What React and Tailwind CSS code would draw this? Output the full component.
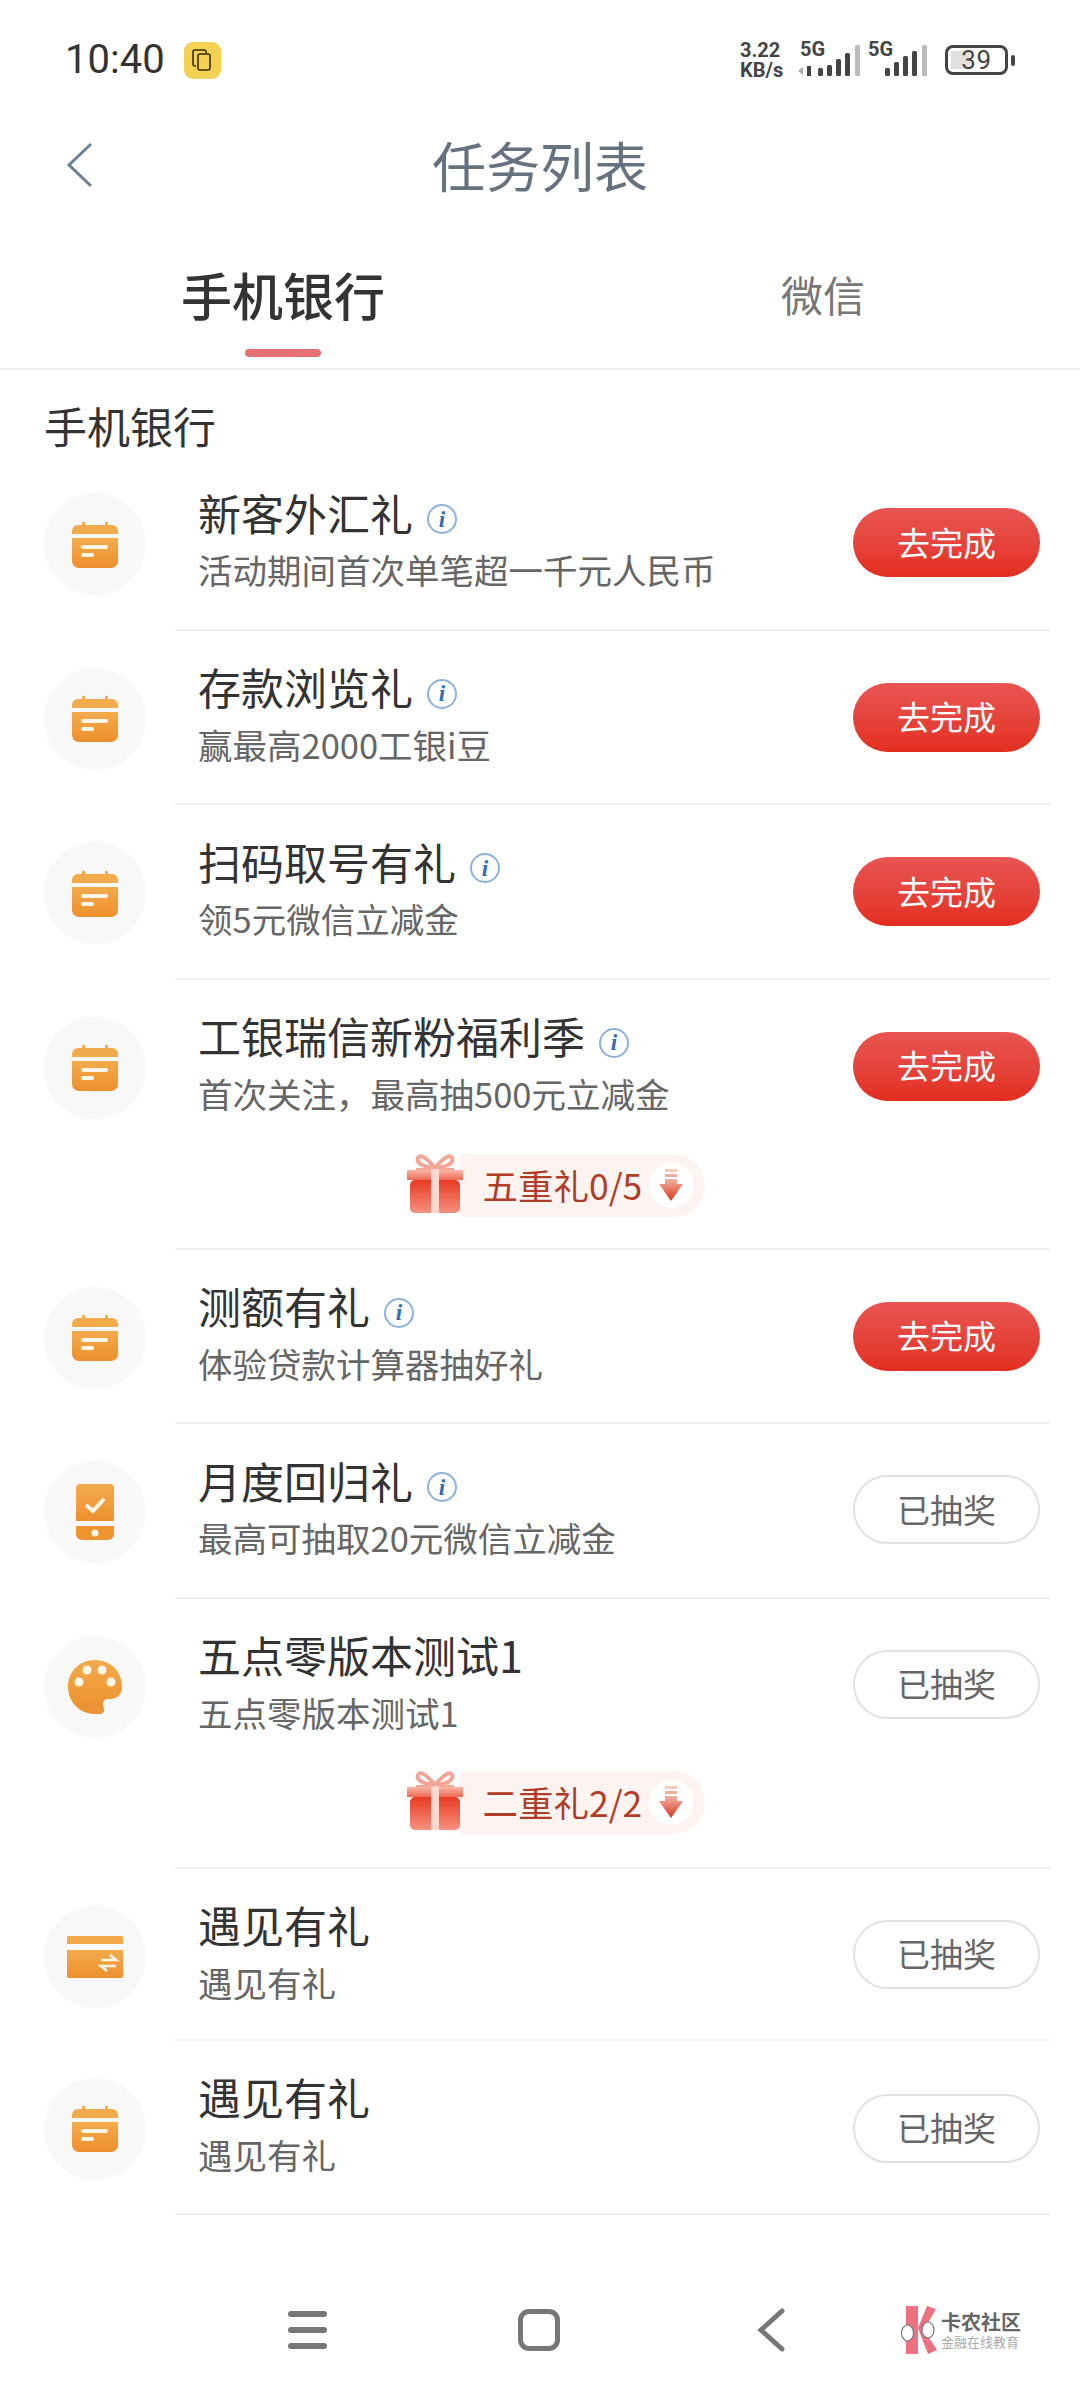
import React from 'react';

const FONT = 'font-["Noto_Sans_CJK_SC","Noto_Sans",sans-serif]';

const tasks = [
  { title: '新客外汇礼', sub: '活动期间首次单笔超一千元人民币', icon: 'calendar', info: true, done: false },
  { title: '存款浏览礼', sub: '赢最高2000工银i豆', icon: 'calendar', info: true, done: false },
  { title: '扫码取号有礼', sub: '领5元微信立减金', icon: 'calendar', info: true, done: false },
  { title: '工银瑞信新粉福利季', sub: '首次关注，最高抽500元立减金', icon: 'calendar', info: true, done: false, gift: '五重礼0/5' },
  { title: '测额有礼', sub: '体验贷款计算器抽好礼', icon: 'calendar', info: true, done: false },
  { title: '月度回归礼', sub: '最高可抽取20元微信立减金', icon: 'phone', info: true, done: true },
  { title: '五点零版本测试1', sub: '五点零版本测试1', icon: 'palette', info: false, done: true, gift: '二重礼2/2' },
  { title: '遇见有礼', sub: '遇见有礼', icon: 'card', info: false, done: true },
  { title: '遇见有礼', sub: '遇见有礼', icon: 'calendar', info: false, done: true },
];

const Gradients = () => (
  <svg width="0" height="0" className="absolute">
    <defs>
      <linearGradient id="orange" x1="0" y1="0" x2="0" y2="1">
        <stop offset="0" stopColor="#f2ab4c" />
        <stop offset="1" stopColor="#ee8f2d" />
      </linearGradient>
      <linearGradient id="giftBox" x1="0" y1="0" x2="0" y2="1">
        <stop offset="0" stopColor="#e93a22" />
        <stop offset="1" stopColor="#f5917f" />
      </linearGradient>
      <linearGradient id="giftLid" x1="0" y1="0" x2="0" y2="1">
        <stop offset="0" stopColor="#f9b5a6" />
        <stop offset="1" stopColor="#ef6a55" />
      </linearGradient>
      <linearGradient id="arrow" x1="0" y1="0" x2="0" y2="1">
        <stop offset="0" stopColor="#f3b3a2" />
        <stop offset="1" stopColor="#d9351c" />
      </linearGradient>
    </defs>
  </svg>
);

const TaskIcon = ({ type }) => {
  if (type === 'phone') {
    return (
      <svg width="38" height="56" viewBox="0 0 38 56">
        <path d="M4 0h30a4 4 0 0 1 4 4v33H0V4a4 4 0 0 1 4-4z" fill="url(#orange)" />
        <path d="M0 42h38v8a6 6 0 0 1-6 6H6a6 6 0 0 1-6-6z" fill="#ee942f" />
        <path d="M10 21l7 6 11-12" fill="none" stroke="#fff6e8" strokeWidth="4" />
        <circle cx="19" cy="49" r="3.5" fill="#fff6e8" />
      </svg>
    );
  }
  if (type === 'palette') {
    return (
      <svg width="54" height="54" viewBox="0 0 54 54">
        <path d="M27 0C12 0 0 11 0 27c0 15 12 27 27 27h4c3 0 5-2 5-4 0-3-1-4-1-6 0-3 2-5 5-5h3c6 0 11-5 11-12C54 11 42 0 27 0z" fill="url(#orange)" />
        <path d="M12 47c2-6 9-8 16-8 3 0 6 1 7 3l-1 4c0 3 2 4 2 5-1 2-3 3-5 3h-4c-6 0-11-3-15-7z" fill="#ec9335" />
        <circle cx="11" cy="22" r="4.5" fill="#fff6e8" />
        <circle cx="19" cy="10" r="4.5" fill="#fff6e8" />
        <circle cx="34" cy="10" r="4.5" fill="#fff6e8" />
        <circle cx="43" cy="22" r="4.5" fill="#fff6e8" />
      </svg>
    );
  }
  if (type === 'card') {
    return (
      <svg width="56" height="42" viewBox="0 0 56 42">
        <path d="M2 0h52a2 2 0 0 1 2 2v6H0V2a2 2 0 0 1 2-2z" fill="#f2a94a" />
        <path d="M0 14h56v26a2 2 0 0 1-2 2H2a2 2 0 0 1-2-2z" fill="url(#orange)" />
        <path d="M34 24h15l-6-5M49 30H34l6 5" fill="none" stroke="#fff6e8" strokeWidth="2.6" />
      </svg>
    );
  }
  return (
    <svg width="46" height="47" viewBox="0 0 46 47">
      <path d="M10 2a1.500 1.500 0 0 1 3 0v2h20V2a1.500 1.500 0 0 1 3 0v2h4a6 6 0 0 1 6 6v3H0v-3a6 6 0 0 1 6-6h4z" fill="#f2ab4c" />
      <path d="M0 17h46v23a7 7 0 0 1-7 7H7a7 7 0 0 1-7-7z" fill="url(#orange)" />
      <rect x="9" y="24" width="27" height="4" rx="2" fill="#fff6e8" />
      <rect x="9" y="32" width="13" height="4" rx="2" fill="#fff6e8" />
    </svg>
  );
};

const GiftBanner = ({ label, up }) => (
  <div className="flex justify-center h-[96px] pl-[30px]">
    <div className={`flex items-center h-[63px] ${up ? '-mt-[2px]' : 'mt-0'}`}>
      <svg width="58" height="59" viewBox="0 0 58 59" className="relative z-10 -mr-[4px] -mt-[4px]">
        <path d="M29 14C20 3 14 0 12 4c-2 4 3 9 17 10zM29 14C38 3 44 0 46 4c2 4-3 9-17 10z" fill="none" stroke="#f3a697" strokeWidth="4" />
        <path d="M10 14h38v2H10z" fill="#f3a697" />
        <rect x="4" y="26" width="50" height="33" rx="5" fill="url(#giftBox)" />
        <path d="M1 16h56v10H1z" fill="url(#giftLid)" />
        <rect x="25" y="15" width="8" height="44" fill="#fbd9d0" />
      </svg>
      <div className="flex items-center h-[63px] w-[245px] rounded-r-full bg-[#fdf3f1] pl-[23px]">
        <span className="text-[35.5px] leading-none text-[#b13d28] w-[166px] whitespace-nowrap">{label}</span>
        <span className="flex items-center justify-center w-[45px] h-[45px] rounded-full bg-white">
          <svg width="24" height="32" viewBox="0 0 24 32">
            <rect x="6" y="0" width="12" height="3" fill="#f5c8bb" />
            <rect x="6" y="5" width="12" height="3" fill="#f0ad9c" />
            <path d="M6 10h12v5h6L12 32 0 15h6z" fill="url(#arrow)" />
          </svg>
        </span>
      </div>
    </div>
  </div>
);

const TaskRow = ({ task, index }) => (
  <div className={`border-b-2 border-[#efefef] ml-[175px] mr-[30px] ${index === 7 ? 'h-[172px]' : task.gift ? 'h-[270px]' : 'h-[174.5px]'}`}>
    <div className="flex h-[174px] -ml-[131px] mr-[10px]">
      <div className="flex items-center justify-center w-[102px] h-[102px] mt-[37px] rounded-full bg-[#f8f8f8] shrink-0">
        <TaskIcon type={task.icon} />
      </div>
      <div className="ml-[52px] pt-[31px] flex-1 min-w-0">
        <div className="flex items-center h-[50px]">
          <span className="text-[43px] leading-none text-[#333333] whitespace-nowrap">{task.title}</span>
          {task.info && (
            <span className="ml-[14px] mt-[14px] flex items-center justify-center w-[30px] h-[30px] rounded-full border-2 border-[#8db2dc] text-[#2e6dbb] text-[23px] italic font-bold font-['Liberation_Serif',serif] leading-none">i</span>
          )}
        </div>
        <div className="mt-[7px] text-[34.5px] leading-[50px] text-[#666666] whitespace-nowrap">{task.sub}</div>
      </div>
      {task.done ? (
        <button className={`${index === 8 ? 'mt-[53px]' : 'mt-[51px]'} w-[187px] h-[69px] rounded-full border-2 border-[#e2e2e2] bg-white text-[33px] text-[#666666] shrink-0`}>已抽奖</button>
      ) : (
        <button className="mt-[52px] w-[187px] h-[69px] rounded-full bg-gradient-to-b from-[#e85552] to-[#e32d1f] text-[33px] text-white shrink-0">去完成</button>
      )}
    </div>
    {task.gift && <div className="-ml-[175px] -mr-[30px]"><GiftBanner label={task.gift} up={index === 6} /></div>}
  </div>
);

const StatusBar = () => (
  <div className="flex items-center h-[120px] pl-[65px] pr-[65px]">
    <span className="text-[40px] leading-none text-[#333333] font-['Roboto',sans-serif]">10:40</span>
    <span className="ml-[19px] flex items-center justify-center w-[37px] h-[37px] rounded-[9px] bg-[#f4d053]">
      <svg width="22" height="24" viewBox="0 0 22 24" fill="none" stroke="#3a2a10" strokeWidth="1.600">
        <path d="M5 18H4a2 2 0 0 1-2-2V4a2 2 0 0 1 2-2h9a2 2 0 0 1 2 2v1" />
        <rect x="7" y="6" width="12" height="16" rx="2" />
      </svg>
    </span>
    <div className="ml-auto flex items-center text-[#444444] font-['Roboto',sans-serif] font-bold">
      <div className="w-[58px] text-[20px] leading-[20px]">
        <div>3.22</div>
        <div>KB/s</div>
      </div>
      <div className="flex flex-col w-[70px] h-[36px] relative">
        <span className="text-[20px] leading-none ml-[2px] -mt-[3px]">5G</span>
        <svg width="66" height="36" viewBox="0 0 66 36" className="absolute left-0 top-0">
          <path d="M0 29l5-4v8z" fill="#aaa" />
          <path d="M9 24h4v10H9z" fill="#444" />
          <rect x="20" y="26" width="5" height="8" rx="1.500" fill="#444" />
          <rect x="29" y="23" width="5" height="11" rx="1.500" fill="#444" />
          <rect x="38" y="17" width="5" height="17" rx="1.500" fill="#444" />
          <rect x="47" y="11" width="5" height="23" rx="1.500" fill="#444" />
          <rect x="57" y="3" width="5" height="31" rx="1.500" fill="#bbb" />
        </svg>
      </div>
      <div className="flex flex-col w-[77px] h-[36px] relative">
        <span className="text-[20px] leading-none -mt-[3px]">5G</span>
        <svg width="66" height="36" viewBox="0 0 66 36" className="absolute left-0 top-0">
          <rect x="17" y="26" width="5" height="8" rx="1.500" fill="#444" />
          <rect x="26" y="20" width="5" height="14" rx="1.500" fill="#444" />
          <rect x="35" y="14" width="5" height="20" rx="1.500" fill="#444" />
          <rect x="44" y="9" width="5" height="25" rx="1.500" fill="#444" />
          <rect x="54" y="3" width="5" height="31" rx="1.500" fill="#bbb" />
        </svg>
      </div>
      <div className="flex items-center">
        <div className="relative flex items-center justify-center w-[63px] h-[30px] rounded-[8px] border-[3px] border-[#444444] font-normal text-[26px] leading-none overflow-hidden">
          <div className="absolute left-[3px] top-[3px] bottom-[3px] w-[19px] bg-[#e0e0e0]" />
          <span className="relative tracking-wide">39</span>
        </div>
        <div className="ml-[3px] w-[4px] h-[11px] rounded-full bg-[#444444]" />
      </div>
    </div>
  </div>
);

const NavLogo = () => (
  <div className="flex items-center ml-[116px]">
    <svg width="38" height="52" viewBox="0 0 38 52">
      <path d="M5 2h12v48H5z" fill="#ee7182" />
      <path d="M17 24L26 2l9 3-12 21 13 20-9 4z" fill="#ee7182" />
      <ellipse cx="6.500" cy="29" rx="6" ry="8" fill="#fff" stroke="#777" strokeWidth="1.200" />
      <ellipse cx="27" cy="26" rx="6" ry="8" fill="#fff" stroke="#777" strokeWidth="1.200" />
    </svg>
    <div className="ml-[2px] flex flex-col items-start">
      <span className="text-[20px] leading-[24px] font-bold text-[#666666] whitespace-nowrap">卡农社区</span>
      <span className="text-[13px] leading-[16px] text-[#aaaaaa] whitespace-nowrap">金融在线教育</span>
    </div>
  </div>
);

export default function App() {
  return (
    <div className={`${FONT} relative flex flex-col w-[1080px] h-[2400px] bg-white overflow-hidden`}>
      <Gradients />
      <StatusBar />

      <div className="flex items-center justify-center relative h-[90px]">
        <svg width="28" height="46" viewBox="0 0 28 46" fill="none" className="absolute left-[66px]" stroke="#6b8195" strokeWidth="3">
          <path d="M25 2L3 23l22 21" />
        </svg>
        <span className="text-[54px] leading-none text-[#65727f]">任务列表</span>
      </div>

      <div className="flex h-[160px] border-b-2 border-[#eeeeee]">
        <div className="w-[566px] flex flex-col items-center">
          <span className="mt-[54px] text-[51px] leading-[60px] font-medium text-[#333333]">手机银行</span>
          <span className="mt-[25px] w-[76px] h-[8px] rounded-full bg-[#e57175]" />
        </div>
        <div className="flex-1 flex justify-center">
          <span className="mt-[54px] text-[42px] leading-[60px] text-[#777777]">微信</span>
        </div>
      </div>

      <div className="pl-[44px] pt-[30px] h-[86px] text-[43px] leading-[50px] text-[#333333]">手机银行</div>

      <div className="flex flex-col">
        {tasks.map((task, i) => (
          <TaskRow key={i} task={task} index={i} />
        ))}
      </div>

      <div className="mt-auto flex items-center h-[140px] pl-[288px]">
        <div className="flex flex-col justify-between w-[39px] h-[38px]">
          <span className="h-[6px] rounded-full bg-[#777777]" />
          <span className="h-[6px] rounded-full bg-[#777777]" />
          <span className="h-[6px] rounded-full bg-[#777777]" />
        </div>
        <div className="ml-[191px] w-[42px] h-[42px] rounded-[11px] border-[5px] border-[#777777]" />
        <svg width="28" height="44" viewBox="0 0 28 44" fill="none" stroke="#777777" strokeWidth="5" strokeLinecap="round" className="ml-[197px]">
          <path d="M25 3L4 22l21 19" />
        </svg>
        <NavLogo />
      </div>
    </div>
  );
}
